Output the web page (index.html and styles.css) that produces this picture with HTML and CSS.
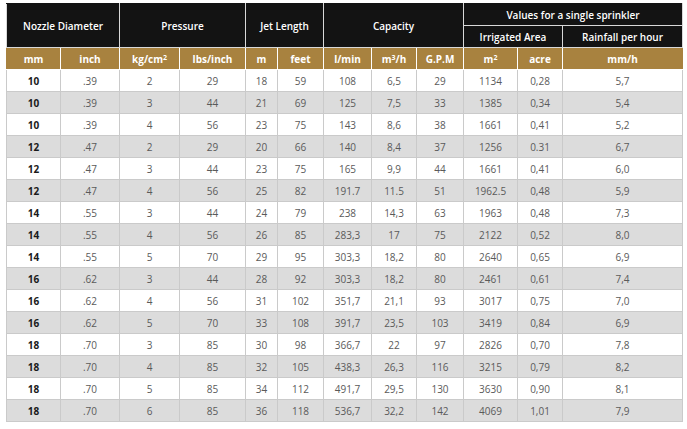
FILE: index.html
```html
<!DOCTYPE html>
<html>
<head>
<meta charset="utf-8">
<link rel="stylesheet" href="styles.css">
</head>
<body>
<table class="spec">
<colgroup>
<col class="c54"><col class="c59"><col class="c60"><col class="c66"><col class="c32"><col class="c46"><col class="c48"><col class="c45"><col class="c47"><col class="c54"><col class="c45"><col class="c120">
</colgroup>
<thead>
<tr class="dark">
<th colspan="2" rowspan="2">Nozzle Diameter</th>
<th colspan="2" rowspan="2">Pressure</th>
<th colspan="2" rowspan="2">Jet Length</th>
<th colspan="3" rowspan="2">Capacity</th>
<th colspan="3">Values for a single sprinkler</th>
</tr>
<tr class="dark">
<th colspan="2">Irrigated Area</th>
<th>Rainfall per hour</th>
</tr>
<tr class="gold">
<th>mm</th><th>inch</th><th>kg/cm<sup>2</sup></th><th>lbs/inch</th><th>m</th><th>feet</th><th>l/min</th><th>m<sup>3</sup>/h</th><th>G.P.M</th><th>m<sup>2</sup></th><th>acre</th><th>mm/h</th>
</tr>
</thead>
<tbody>
<tr><td>10</td><td>.39</td><td>2</td><td>29</td><td>18</td><td>59</td><td>108</td><td>6,5</td><td>29</td><td>1134</td><td>0,28</td><td>5,7</td></tr>
<tr><td>10</td><td>.39</td><td>3</td><td>44</td><td>21</td><td>69</td><td>125</td><td>7,5</td><td>33</td><td>1385</td><td>0,34</td><td>5,4</td></tr>
<tr><td>10</td><td>.39</td><td>4</td><td>56</td><td>23</td><td>75</td><td>143</td><td>8,6</td><td>38</td><td>1661</td><td>0,41</td><td>5,2</td></tr>
<tr><td>12</td><td>.47</td><td>2</td><td>29</td><td>20</td><td>66</td><td>140</td><td>8,4</td><td>37</td><td>1256</td><td>0.31</td><td>6,7</td></tr>
<tr><td>12</td><td>.47</td><td>3</td><td>44</td><td>23</td><td>75</td><td>165</td><td>9,9</td><td>44</td><td>1661</td><td>0,41</td><td>6,0</td></tr>
<tr><td>12</td><td>.47</td><td>4</td><td>56</td><td>25</td><td>82</td><td>191.7</td><td>11.5</td><td>51</td><td>1962.5</td><td>0,48</td><td>5,9</td></tr>
<tr><td>14</td><td>.55</td><td>3</td><td>44</td><td>24</td><td>79</td><td>238</td><td>14,3</td><td>63</td><td>1963</td><td>0,48</td><td>7,3</td></tr>
<tr><td>14</td><td>.55</td><td>4</td><td>56</td><td>26</td><td>85</td><td>283,3</td><td>17</td><td>75</td><td>2122</td><td>0,52</td><td>8,0</td></tr>
<tr><td>14</td><td>.55</td><td>5</td><td>70</td><td>29</td><td>95</td><td>303,3</td><td>18,2</td><td>80</td><td>2640</td><td>0,65</td><td>6,9</td></tr>
<tr><td>16</td><td>.62</td><td>3</td><td>44</td><td>28</td><td>92</td><td>303,3</td><td>18,2</td><td>80</td><td>2461</td><td>0,61</td><td>7,4</td></tr>
<tr><td>16</td><td>.62</td><td>4</td><td>56</td><td>31</td><td>102</td><td>351,7</td><td>21,1</td><td>93</td><td>3017</td><td>0,75</td><td>7,0</td></tr>
<tr><td>16</td><td>.62</td><td>5</td><td>70</td><td>33</td><td>108</td><td>391,7</td><td>23,5</td><td>103</td><td>3419</td><td>0,84</td><td>6,9</td></tr>
<tr><td>18</td><td>.70</td><td>3</td><td>85</td><td>30</td><td>98</td><td>366,7</td><td>22</td><td>97</td><td>2826</td><td>0,70</td><td>7,8</td></tr>
<tr><td>18</td><td>.70</td><td>4</td><td>85</td><td>32</td><td>105</td><td>438,3</td><td>26,3</td><td>116</td><td>3215</td><td>0,79</td><td>8,2</td></tr>
<tr><td>18</td><td>.70</td><td>5</td><td>85</td><td>34</td><td>112</td><td>491,7</td><td>29,5</td><td>130</td><td>3630</td><td>0,90</td><td>8,1</td></tr>
<tr><td>18</td><td>.70</td><td>6</td><td>85</td><td>36</td><td>118</td><td>536,7</td><td>32,2</td><td>142</td><td>4069</td><td>1,01</td><td>7,9</td></tr>
</tbody>
</table>
</body>
</html>
```
FILE: styles.css
```css
html, body {
  margin: 0;
  padding: 0;
  background: #fff;
}
body {
  padding: 3px 0 0 6px;
  font-family: "Open Sans", "DejaVu Sans", sans-serif;
}
.spec {
  border-collapse: collapse;
  table-layout: fixed;
  width: 676px;
}
.c32 { width: 32px; }
.c45 { width: 45px; }
.c46 { width: 46px; }
.c47 { width: 47px; }
.c48 { width: 48px; }
.c54 { width: 54px; }
.c59 { width: 59px; }
.c60 { width: 60px; }
.c66 { width: 66px; }
.c120 { width: 120px; }
.spec th, .spec td {
  height: 21px;
  padding: 0;
  text-align: center;
  vertical-align: middle;
  white-space: nowrap;
  line-height: 12px;
}
.spec th {
  font-size: 10px;
  font-weight: 600;
  color: #fff;
}
.dark th {
  background: #131313;
  border: 1px solid #d8d8d8;
  border-top-color: #131313;
}
.dark:first-child th {
  border-top: 1px solid #131313;
}
.gold th {
  background: #a8823f;
  border: 1px solid #ffffff;
  border-top-color: #a8823f;
  font-weight: 700;
}
.gold th:first-child { border-left-color: #a8823f; }
.gold th:last-child { border-right-color: #a8823f; }
.spec sup {
  font-size: 7px;
  line-height: 0;
  vertical-align: 3px;
}
.spec td {
  font-size: 10px;
  color: #5a5a5a;
  border: 1px solid #cacaca;
  font-weight: 400;
}
.spec td:first-child {
  font-weight: 700;
  color: #1a1a1a;
}
.spec tbody tr:nth-child(even) td {
  background: #dcdcdc;
}
```
